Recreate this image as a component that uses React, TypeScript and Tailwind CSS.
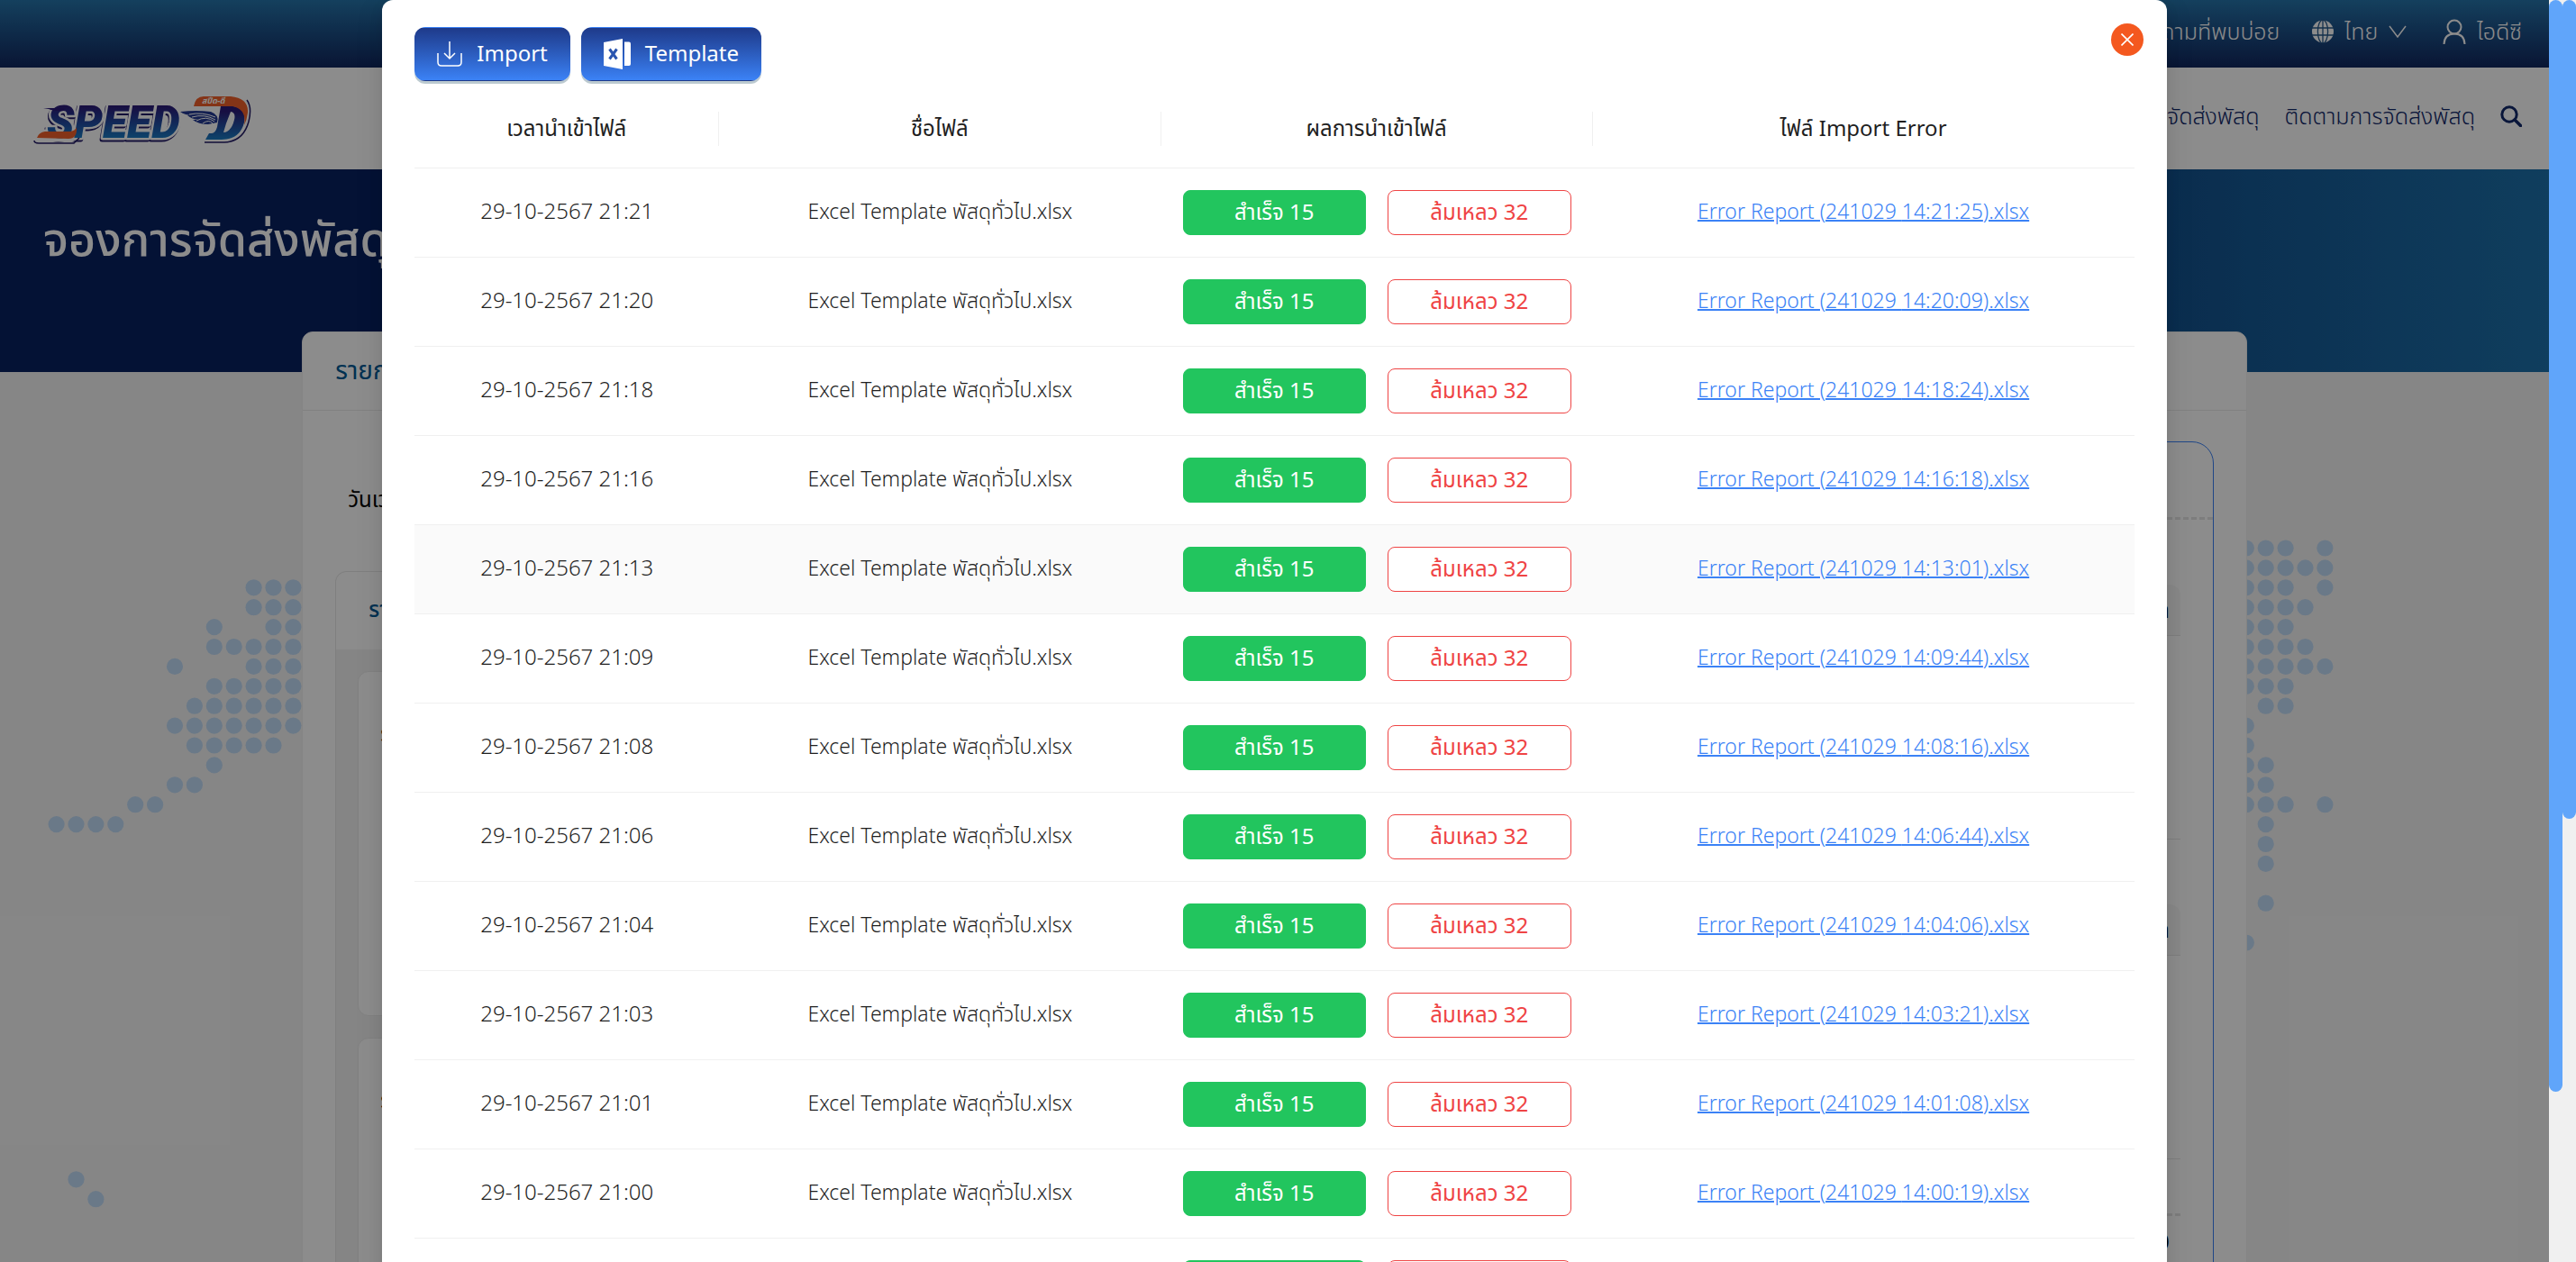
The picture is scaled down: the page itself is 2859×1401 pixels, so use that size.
import React from "react";

type ImportRow = { time: string; report: string };

const rows: ImportRow[] = [
  { time: "29-10-2567 21:21", report: "14:21:25" },
  { time: "29-10-2567 21:20", report: "14:20:09" },
  { time: "29-10-2567 21:18", report: "14:18:24" },
  { time: "29-10-2567 21:16", report: "14:16:18" },
  { time: "29-10-2567 21:13", report: "14:13:01" },
  { time: "29-10-2567 21:09", report: "14:09:44" },
  { time: "29-10-2567 21:08", report: "14:08:16" },
  { time: "29-10-2567 21:06", report: "14:06:44" },
  { time: "29-10-2567 21:04", report: "14:04:06" },
  { time: "29-10-2567 21:03", report: "14:03:21" },
  { time: "29-10-2567 21:01", report: "14:01:08" },
  { time: "29-10-2567 21:00", report: "14:00:19" },
  { time: "29-10-2567 20:58", report: "13:58:37" },
];

const hoveredRow = 4;

// Each entry is a lattice row: [row index, filled columns].
const westDots: [number, number[]][] = [
  [0, [10, 11, 12]],
  [1, [10, 11, 12]],
  [2, [8, 11, 12]],
  [3, [8, 9, 10, 11, 12]],
  [4, [6, 10, 11, 12]],
  [5, [8, 9, 10, 11, 12]],
  [6, [7, 8, 9, 10, 11, 12]],
  [7, [6, 7, 8, 9, 10, 11, 12]],
  [8, [7, 8, 9, 10, 11]],
  [9, [8]],
  [10, [6, 7]],
  [11, [4, 5]],
  [12, [0, 1, 2, 3]],
  [30, [1]],
  [31, [2]],
];

const eastDots: [number, number[]][] = [
  [0, [0, 1, 2, 4]],
  [1, [0, 1, 2, 3, 4]],
  [2, [0, 1, 2, 4]],
  [3, [0, 1, 2, 3]],
  [4, [0, 1, 2]],
  [5, [0, 1, 2, 3]],
  [6, [0, 1, 2, 3, 4]],
  [7, [0, 1, 2]],
  [8, [1, 2]],
  [9, [0]],
  [10, [0]],
  [11, [0, 1]],
  [12, [0, 1]],
  [13, [0, 1, 2, 4]],
  [14, [1]],
  [15, [1]],
  [16, [1]],
  [18, [1]],
  [20, [0]],
];

function Dots({ data, x, y }: { data: [number, number[]][]; x: number; y: number }) {
  return (
    <g fill="#c1dcf7">
      {data.flatMap(([r, cols]) =>
        cols.map((c) => <circle key={`${r}-${c}`} cx={x + c * 21.9} cy={y + r * 21.9} r="9.1" />),
      )}
    </g>
  );
}

function DottedMap() {
  return (
    <svg
      className="absolute inset-0 h-full w-full"
      viewBox="0 0 2829 1401"
      preserveAspectRatio="xMidYMin slice"
      aria-hidden="true"
    >
      <Dots data={westDots} x={62.6} y={652.3} />
      <Dots data={eastDots} x={2492.8} y={608.5} />
    </svg>
  );
}

function Logo() {
  return (
    <svg width="260" height="90" viewBox="0 0 260 90" role="img" aria-label="SPEED-D">
      <defs>
        <linearGradient id="navy" x1="0" y1="0" x2="0" y2="1">
          <stop offset="0.15" stopColor="#2b1a78" />
          <stop offset="1" stopColor="#1a7cc4" />
        </linearGradient>
        <linearGradient id="navyText" gradientUnits="userSpaceOnUse" x1="0" y1="27" x2="0" y2="63">
          <stop offset="0" stopColor="#2b1a78" />
          <stop offset="0.35" stopColor="#233a94" />
          <stop offset="1" stopColor="#1a7cc4" />
        </linearGradient>
      </defs>
      <g
        fontFamily="Roboto, sans-serif"
        fontWeight="900"
        fontStyle="italic"
        fontSize="50"
        strokeLinejoin="round"
      >
        <text x="21" y="64" fill="#221a66" stroke="#221a66" strokeWidth="5">SPEED</text>
        <text x="22" y="62" fill="#ffffff" stroke="#ffffff" strokeWidth="5">SPEED</text>
        <path d="M8 65 L17 54 H50 L56 62 L50 65 Z" fill="#ffffff" stroke="#ffffff" strokeWidth="3" />
        <path d="M8 65 Q8 68 13 68 H52 L58 62" fill="none" stroke="#221a66" strokeWidth="1.5" />
        <text x="22" y="62" fill="url(#navyText)">SPEED</text>
      </g>
      <path d="M18 29 L42 29 L40 32 Q28 32 24 30 Z" fill="#2b1a78" />
      <path d="M11 62 Q13 56 20 55 H48 Q54 54 55 50 Q56 63 46 63 Z" fill="#f1602a" />
      <path d="M197 67 H219 Q240 66 246 44 Q250 28 244 20" fill="none" stroke="#221a66" strokeWidth="1.5" />
      <path
        d="M215 27 H229 Q244 29 241 45 Q236 64 216 64 H198 L202 57 H205 Q209 57 211 50 Z"
        fill="url(#navy)"
      />
      <path d="M226 33 Q232 34 230 42 Q227 55 218 56 L221 46 Z" fill="#ffffff" />
      <path d="M185 27 Q187 16 196 16 H226 Q246 18 245 34 Q244 42 241 48 Q244 30 228 27 Z" fill="#f1602a" />
      <text
        x="194"
        y="24"
        fill="#ffffff"
        fontFamily="'Noto Sans Thai', 'Noto Sans', sans-serif"
        fontWeight="700"
        fontStyle="italic"
        fontSize="9"
      >
        สปีด-ดี
      </text>
      <path
        d="M170 33 Q188 31 204 33 Q214 37 211 45 L201 47 Q190 47 184 42 L190 42 Q182 41 178 37 L184 37 Q175 37 170 33 Z"
        fill="#233a94"
      />
      <g fill="none" stroke="#ffffff" strokeWidth="1">
        <path d="M180 36 Q195 33 209 39" />
        <path d="M183 39 Q197 35 209 42" />
        <path d="M188 43 Q199 37 208 44" />
        <path d="M195 46 Q202 41 206 46" />
      </g>
    </svg>
  );
}

function GlobeIcon() {
  return (
    <svg width="24" height="26" viewBox="0 0 24 26" aria-hidden="true">
      <ellipse cx="12" cy="13" rx="12" ry="12.5" fill="#ffffff" />
      <g fill="none" stroke="#26588a" strokeWidth="1.3">
        <ellipse cx="12" cy="13" rx="5.6" ry="13" />
        <path d="M12 0 V26 M0 9 H24 M0 17 H24" />
      </g>
    </svg>
  );
}

function UserIcon() {
  return (
    <svg width="26" height="28" viewBox="0 0 26 28" fill="none" stroke="#ffffff" strokeWidth="2" aria-hidden="true">
      <circle cx="13" cy="9" r="7.5" />
      <path d="M1.5 28 Q2 16.500 13 16.500 Q24 16.500 24.500 28" />
    </svg>
  );
}

function SearchIcon() {
  return (
    <svg width="24" height="24" viewBox="0 0 24 24" fill="none" stroke="#11286a" aria-hidden="true">
      <circle cx="10" cy="10" r="8.200" strokeWidth="3" />
      <path d="M16 16 L22.500 22.500" strokeWidth="3.500" strokeLinecap="round" />
    </svg>
  );
}

function TopBar() {
  return (
    <div className="flex h-[75px] items-center justify-end gap-9 bg-linear-to-b from-[#2675ab] to-[#11275f] px-[30px] pb-1.5 text-[25px] font-light text-white">
      <a href="#faq">คำถามที่พบบ่อย</a>
      <button className="flex items-center gap-3">
        <GlobeIcon />
        <span>ไทย</span>
        <svg width="20" height="14" viewBox="0 0 20 14" fill="none" stroke="#ffffff" strokeWidth="1.500" aria-hidden="true">
          <path d="M1 1 L10 13 L19 1" />
        </svg>
      </button>
      <button className="ml-1 flex items-center gap-3">
        <UserIcon />
        <span>ไอดีซี</span>
      </button>
    </div>
  );
}

function Header() {
  return (
    <header className="flex h-[113px] items-center justify-between bg-white px-[30px] text-[#11286a]">
      <a href="#home" className="mt-2">
        <Logo />
      </a>
      <nav className="flex items-center gap-7 pb-1.5 text-[25px] font-light">
        <a href="#booking">จองการจัดส่งพัสดุ</a>
        <a href="#tracking">ติดตามการจัดส่งพัสดุ</a>
        <button aria-label="ค้นหา">
          <SearchIcon />
        </button>
      </nav>
    </header>
  );
}

function SummaryBlock() {
  return (
    <div>
      <div className="flex h-[57px] items-center justify-end rounded-t-xl border-b border-[#e6e6e6] bg-[#f7f7f7] pr-3 text-2xl font-medium text-black">
        ราคา
      </div>
      <div className="h-[226px] border-b border-[#e6e6e6]" />
    </div>
  );
}

function PageCard() {
  return (
    <section className="relative -mt-[45px] min-h-[1100px] rounded-t-xl border border-[#f0f0f0] bg-white">
      <h2 className="flex h-[87px] items-center border-b border-[#ebebeb] px-9 pb-1 text-[28px] text-[#005a96]">
        รายการพัสดุ
      </h2>
      <div className="grid grid-cols-2 gap-9 px-9 pt-[34px]">
        <div>
          <p className="flex h-[144px] items-center px-3.5 pb-4 text-2xl text-black">วันเวลาที่ทำรายการ</p>
          <div className="rounded-xl border border-[#e8e8e8] bg-[#f2f2f2]">
            <h3 className="flex h-[86px] items-center rounded-t-xl bg-white px-9 pb-1 text-2xl font-medium text-[#005a96]">
              รายการพัสดุ
            </h3>
            <div className="flex flex-col gap-6 px-6 py-6">
              {["รหัสพัสดุ 1", "รหัสพัสดุ 2"].map((name) => (
                <div
                  key={name}
                  className="h-[383px] rounded-xl border border-[#ececec] bg-white px-6 pt-[52px] text-2xl text-black"
                >
                  {name}
                </div>
              ))}
            </div>
          </div>
        </div>
        <div className="rounded-t-3xl border border-[#3b82f6]">
          <div className="h-[86px] border-b-[3px] border-dashed border-[#e4e4e4]" />
          <div className="px-9 pt-[72px]">
            <div className="flex flex-col gap-[72px]">
              <SummaryBlock />
              <SummaryBlock />
            </div>
            <div className="mt-[60px] border-t-[3px] border-dashed border-[#e4e4e4] pt-3 pr-3 text-right text-2xl text-black">
              0
            </div>
          </div>
        </div>
      </div>
    </section>
  );
}

function Page() {
  return (
    <div className="relative h-full bg-[#f5f5f5]">
      <DottedMap />
      <div className="relative">
        <TopBar />
        <Header />
        <div className="h-[225px] bg-linear-to-r from-[#092162] from-60% to-[#1d71ab] px-12 pt-11 text-[52px] font-medium text-white">
          <h1 className="leading-[64px]">จองการจัดส่งพัสดุ</h1>
        </div>
        <div className="px-[11.850%]">
          <PageCard />
        </div>
      </div>
    </div>
  );
}

function ImportIcon() {
  return (
    <svg width="28" height="28" viewBox="0 0 28 28" fill="none" stroke="#ffffff" strokeWidth="1.500" aria-hidden="true">
      <path d="M14 0 V19 M8 13 L14 19 L20 13" />
      <path d="M1 13 V23 Q1 27 5 27 H23 Q27 27 27 23 V13" />
    </svg>
  );
}

function ExcelIcon() {
  return (
    <svg width="30" height="34" viewBox="0 0 30 34" aria-hidden="true">
      <path d="M0 4 L21 0 V34 L0 30 Z" fill="#ffffff" />
      <path d="M23 3.500 H28 Q30 3.500 30 5.500 V28 Q30 30 28 30 H23 Z" fill="#ffffff" />
      <path d="M6.500 11.500 L14.500 22.500 M14.500 11.500 L6.500 22.500" stroke="#2a55b0" strokeWidth="3" />
    </svg>
  );
}

function ActionButton({ icon, children }: { icon: React.ReactNode; children: React.ReactNode }) {
  return (
    <button className="flex h-[60px] items-center gap-4 rounded-xl border border-transparent bg-linear-to-b from-[#1e3a8a] to-[#3b82f6] px-6 text-2xl text-white shadow-[0_3px_0_#bccad0]">
      {icon}
      <span className="pb-0.5">{children}</span>
    </button>
  );
}

function ImportTable() {
  const heads = [
    { label: "เวลานำเข้าไฟล์", width: "w-[17.700%]" },
    { label: "ชื่อไฟล์", width: "w-[25.700%]" },
    { label: "ผลการนำเข้าไฟล์", width: "w-[25.100%]" },
    { label: "ไฟล์ Import Error", width: "w-[31.500%]" },
  ];
  return (
    <table className="mt-2.5 w-full table-fixed border-separate border-spacing-0 text-center text-2xl text-[#1f1f1f]">
      <thead>
        <tr>
          {heads.map((h, i) => (
            <th key={h.label} className={`${h.width} border-b border-[#f0f0f0] py-6 font-normal`}>
              <div className={`h-[38px] leading-[36px] ${i < 3 ? "border-r border-[#f0f0f0]" : ""}`}>{h.label}</div>
            </th>
          ))}
        </tr>
      </thead>
      <tbody className="font-light">
        {rows.map((r, i) => (
          <tr key={r.time} className={i === hoveredRow ? "bg-[#fafafa]" : ""}>
            <td className="border-b border-[#f0f0f0] p-6 pb-7">{r.time}</td>
            <td className="border-b border-[#f0f0f0] p-6 pb-7 text-[23px] whitespace-nowrap">
              Excel Template พัสดุทั่วไป.xlsx
            </td>
            <td className="border-b border-[#f0f0f0] p-6">
              <div className="flex gap-6 font-normal">
                <button className="h-[50px] flex-1 rounded-lg border border-[#22c55e] bg-[#22c55e] pb-0.5 text-white">
                  สำเร็จ 15
                </button>
                <button className="h-[50px] flex-1 rounded-lg border border-[#ef4444] bg-white pb-0.5 text-[#ef4444]">
                  ล้มเหลว 32
                </button>
              </div>
            </td>
            <td className="border-b border-[#f0f0f0] p-6 pb-7 text-[23px]">
              <a href="#report" className="text-[#3b82f6] underline decoration-2">
                Error Report (241029 {r.report}).xlsx
              </a>
            </td>
          </tr>
        ))}
      </tbody>
    </table>
  );
}

function ImportDialog() {
  return (
    <div
      role="dialog"
      aria-modal="true"
      aria-label="Import"
      className="relative w-[70%] rounded-xl bg-white px-9 pt-[30px] pb-9 shadow-[0_6px_16px_0_rgba(0,0,0,0.08),0_3px_6px_-4px_rgba(0,0,0,0.12),0_9px_28px_8px_rgba(0,0,0,0.05)]"
    >
      <div className="flex gap-3">
        <ActionButton icon={<ImportIcon />}>Import</ActionButton>
        <ActionButton icon={<ExcelIcon />}>Template</ActionButton>
      </div>
      <button
        aria-label="ปิด"
        className="absolute top-[26px] right-[26px] flex size-9 items-center justify-center rounded-full bg-[#f4581f]"
      >
        <svg width="14" height="14" viewBox="0 0 14 14" stroke="#ffffff" strokeWidth="1.600" aria-hidden="true">
          <path d="M0.500 0.500 L13.500 13.500 M13.500 0.500 L0.500 13.500" />
        </svg>
      </button>
      <ImportTable />
    </div>
  );
}

export default function App() {
  return (
    <div className='flex h-screen overflow-hidden bg-[#f0f0f0] font-["Noto_Sans","Noto_Sans_Thai",sans-serif]'>
      <div className="relative min-w-0 flex-1 overflow-hidden">
        <Page />
        <div className="absolute inset-0 flex items-start justify-center overflow-hidden bg-black/45">
          <ImportDialog />
        </div>
      </div>
      <div className="w-[15px]">
        <div className="h-[86.500%] rounded-full bg-[#60a5fa]" />
      </div>
      <div className="w-[15px]">
        <div className="h-[64.900%] rounded-full bg-[#60a5fa]" />
      </div>
    </div>
  );
}
